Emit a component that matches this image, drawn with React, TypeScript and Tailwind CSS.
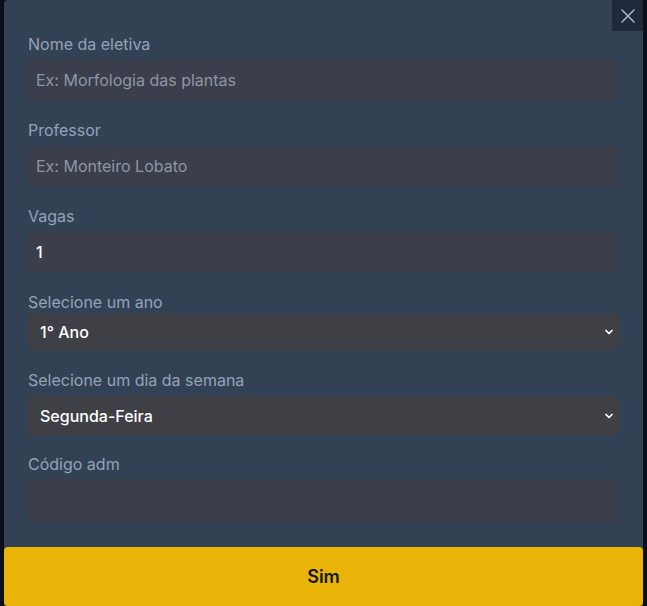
import { ChevronDown, X } from "lucide-react";

const inputClass =
  "block h-10 w-full rounded bg-[#3a3f4b] px-2 text-base text-white placeholder:text-[#8f96a3] outline-none";

function Label({ children, className = "" }: { children: string; className?: string }) {
  return (
    <label className={`block text-base leading-6 text-[#94a3b8] ${className}`}>{children}</label>
  );
}

function SelectField({
  value,
  options,
  className,
}: {
  value: string;
  options: string[];
  className: string;
}) {
  return (
    <div className={`relative ${className}`}>
      <select
        defaultValue={value}
        className="block h-full w-full appearance-none rounded bg-[#3f3f46] px-3 text-base font-medium text-white outline-none"
      >
        {options.map((o) => (
          <option key={o}>{o}</option>
        ))}
      </select>
      <ChevronDown
        className="pointer-events-none absolute right-1 top-1/2 h-3 w-3 -translate-y-1/2 text-white"
        strokeWidth={3.5}
      />
    </div>
  );
}

export default function App() {
  return (
    <div
      className="h-[606px] w-[647px] overflow-hidden bg-[#0b0f19] px-1"
      style={{ fontFamily: "Inter, 'Noto Sans', sans-serif" }}
    >
      <div className="relative flex h-full flex-col rounded-t bg-[#334155]">
        <button
          type="button"
          aria-label="Fechar"
          className="absolute right-0 top-0 flex h-[31px] w-[31px] items-center justify-center bg-[#1e293b] text-[#a9b4c4]"
        >
          <X className="h-6 w-6" strokeWidth={1.5} />
        </button>

        <form className="px-6 pt-8">
          <Label>Nome da eletiva</Label>
          <input className={`mt-1 ${inputClass}`} placeholder="Ex: Morfologia das plantas" />

          <Label className="mt-[18px]">Professor</Label>
          <input className={`mt-1 ${inputClass}`} placeholder="Ex: Monteiro Lobato" />

          <Label className="mt-[18px]">Vagas</Label>
          <input
            type="number"
            defaultValue={1}
            className={`mt-1 ${inputClass} font-medium [appearance:textfield]`}
          />

          <Label className="mt-[18px]">Selecione um ano</Label>
          <SelectField
            value="1° Ano"
            options={["1° Ano", "2° Ano", "3° Ano"]}
            className="mt-0 h-9"
          />

          <Label className="mt-[18px]">Selecione um dia da semana</Label>
          <SelectField
            value="Segunda-Feira"
            options={["Segunda-Feira", "Terça-Feira", "Quarta-Feira", "Quinta-Feira", "Sexta-Feira"]}
            className="mt-1 h-[39px]"
          />

          <Label className="mt-[17px]">Código adm</Label>
          <input className={`mt-[3px] h-[43px] ${inputClass}`} type="password" />
        </form>

        <button
          type="button"
          className="mt-[25px] h-[59px] w-full rounded bg-[#eab308] text-lg font-semibold text-[#111827]"
        >
          Sim
        </button>
      </div>
    </div>
  );
}
